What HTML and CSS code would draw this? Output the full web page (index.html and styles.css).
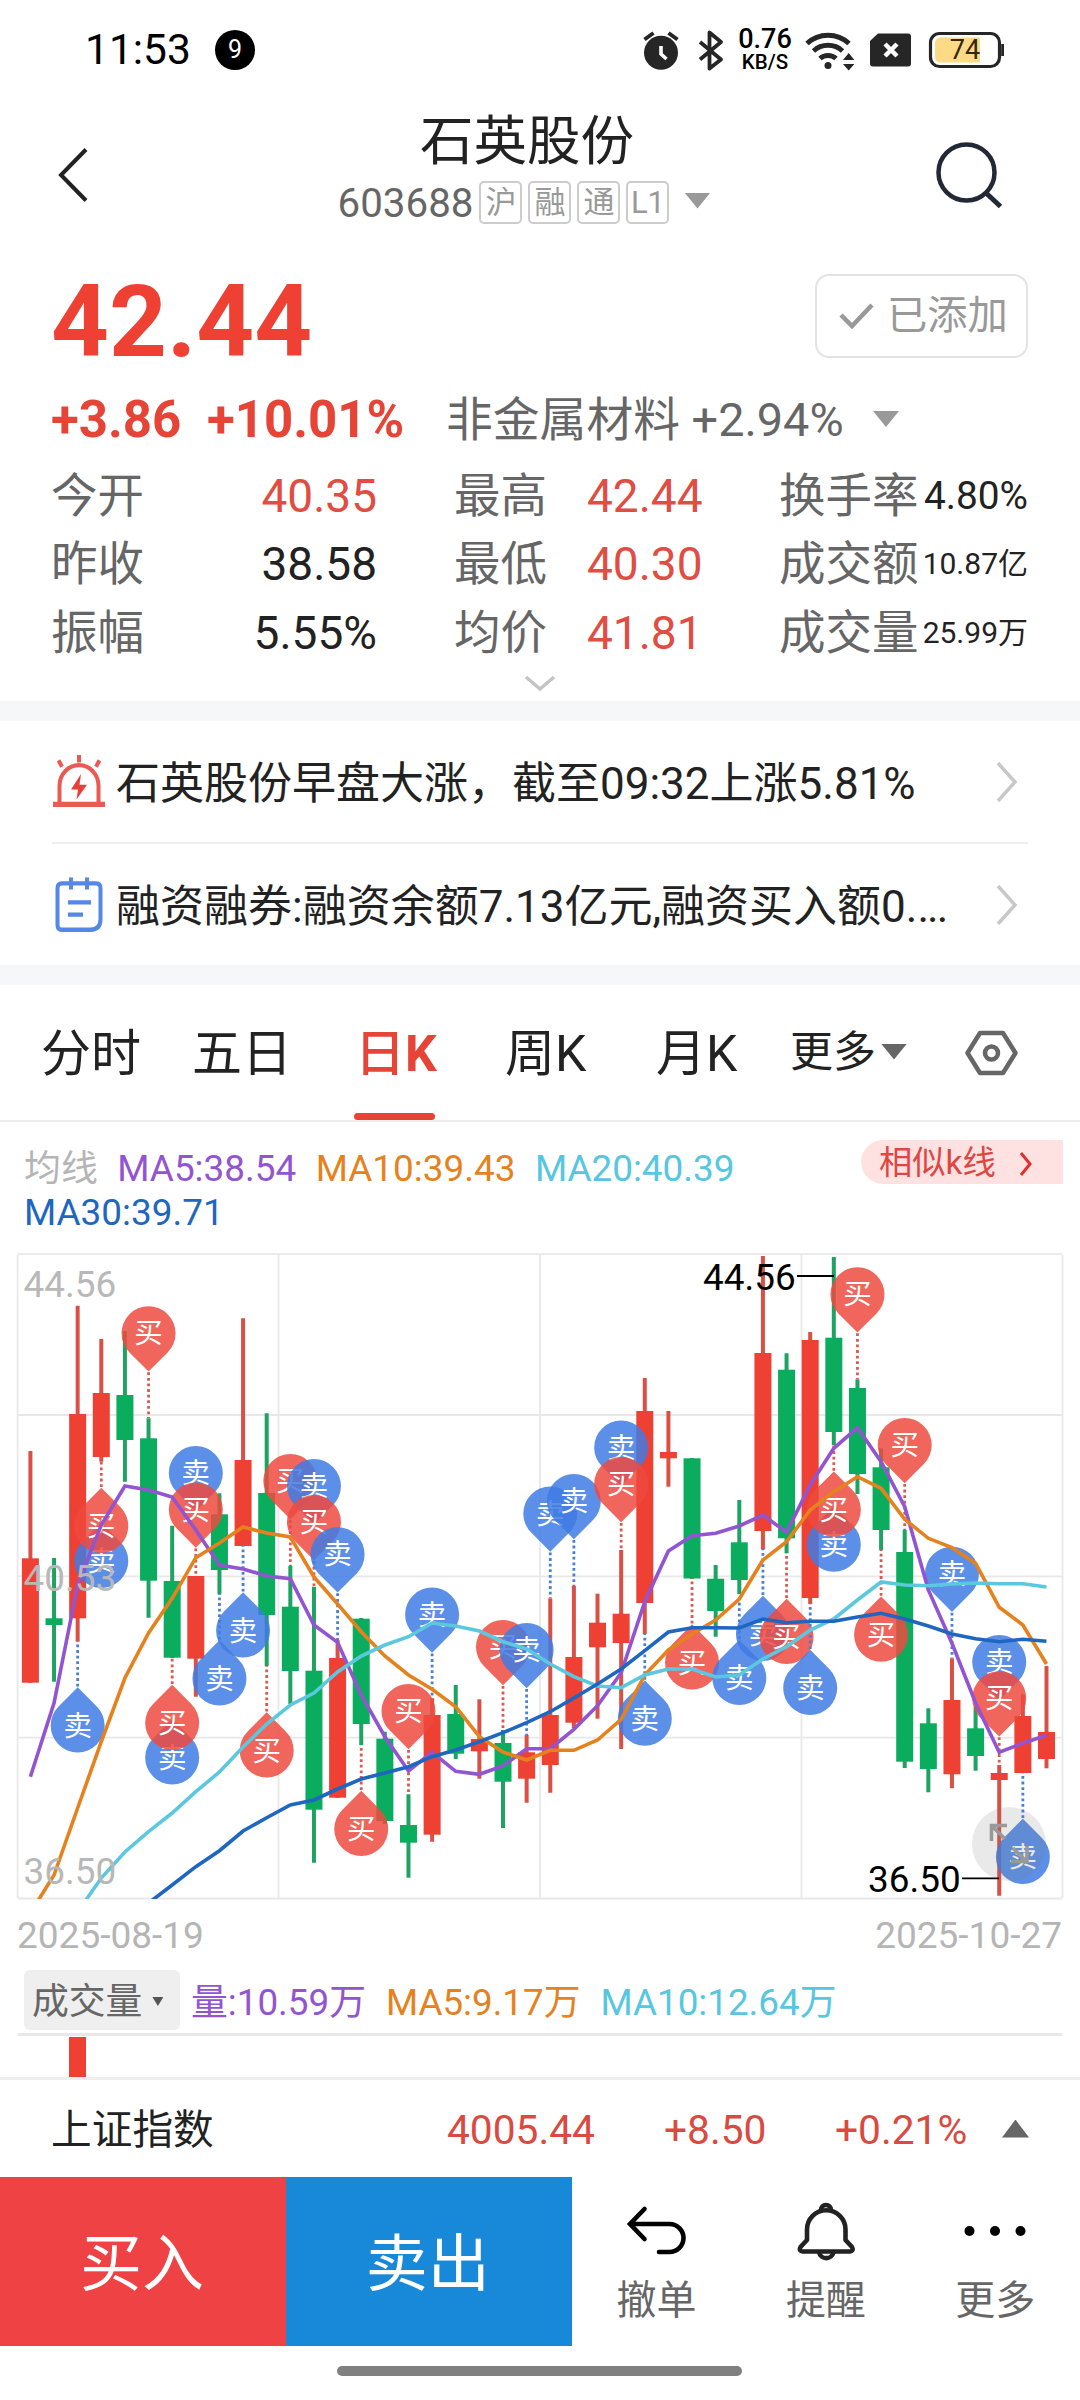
FILE: index.html
```html
<!DOCTYPE html>
<html lang="zh-CN">
<head>
<meta charset="utf-8">
<title>石英股份 603688</title>
<link rel="stylesheet" href="styles.css">
</head>
<body>
<div class="status">
  <span class="clock">11:53</span><span class="notice">9</span>
  <div class="status-icons">
    <svg class="i-alarm" width="38" height="44" viewBox="642 28 38 44"><circle cx="661" cy="52.8" r="17" fill="#262626"/><path d="M644.5 39.5l9-6.5M677.500 39.500l-9-6.5" stroke="#262626" stroke-width="4" fill="none"/><path d="M661 46v8l5.500 5" stroke="#fff" stroke-width="3.600" fill="none"/></svg>
    <svg class="i-bt" width="26" height="44" viewBox="698 28 26 44"><path d="M700 42l21 17.500-11.500 9V32.500L721 42l-21 17.500" fill="none" stroke="#262626" stroke-width="3.800" stroke-linejoin="round"/></svg>
    <div class="speed"><b>0.76</b><i>KB/S</i></div>
    <svg class="i-wifi" width="52" height="44" viewBox="804 26 52 44"><g fill="none" stroke="#262626" stroke-width="5"><path d="M807 41.500a31 31 0 0 1 42 0M813.500 49a21.500 21.500 0 0 1 29 0M820 56.500a12 12 0 0 1 16 0"/></g><circle cx="828" cy="63.500" r="3.500" fill="#262626"/><path d="M843 58l5.700-7 5.700 7zM843 62l5.700 6.500 5.700-6.500z" fill="#262626"/></svg>
    <svg class="i-sim" width="42" height="34" viewBox="870 33 42 34"><path d="M878 33.500h30q3 0 3 3v27q0 3-3 3h-35q-3 0-3-3V41z" fill="#262626"/><path d="M885 44l12 12M897 44l-12 12" stroke="#fff" stroke-width="4.500"/></svg>
    <svg class="i-bat" width="76" height="38" viewBox="928 31 76 38"><rect x="930.500" y="33.500" width="69" height="33" rx="9" fill="#fff" stroke="#262626" stroke-width="3.200"/><path d="M941 37.500h39v25h-39q-6 0-6-6v-13q0-6 6-6z" fill="#fddb86"/><path d="M1002.600 44v12" stroke="#262626" stroke-width="2.800"/><text x="965" y="59" font-size="27" text-anchor="middle" fill="#33260a">74</text></svg>
  </div>
</div>

<header class="header">
  <svg class="back" width="34" height="60" viewBox="56 145 34 60"><path d="M86 149.500L61 175l25 25.500" fill="none" stroke="#222" stroke-width="4"/></svg>
  <div class="title">
    <h1>石英股份</h1>
    <div class="code"><span class="num">603688</span><span class="tag">沪</span><span class="tag">融</span><span class="tag">通</span><span class="tag">L1</span><i class="tri"></i></div>
  </div>
  <svg class="search" width="68" height="68" viewBox="936 142 68 68"><circle cx="966.500" cy="172.500" r="28" fill="none" stroke="#232836" stroke-width="4.500"/><path d="M985 192l15.500 14.500" stroke="#232836" stroke-width="5"/></svg>
</header>

<section class="quote">
  <div class="price-row">
    <strong class="price">42.44</strong>
    <div class="added"><svg width="38" height="30" viewBox="0 0 38 30"><path d="M3 14l11 11L34 4" fill="none" stroke="#999" stroke-width="4.500"/></svg>已添加</div>
  </div>
  <div class="change"><b class="diff">+3.86</b><b class="pct">+10.01%</b><span class="sector">非金属材料 +2.94%</span><i class="tri"></i></div>
  <div class="stats">
    <div><span>今开</span><em class="up">40.35</em></div><div><span>最高</span><em class="up">42.44</em></div><div><span>换手率</span><em class="mid">4.80%</em></div>
    <div><span>昨收</span><em>38.58</em></div><div><span>最低</span><em class="up">40.30</em></div><div><span>成交额</span><em class="small">10.87亿</em></div>
    <div><span>振幅</span><em>5.55%</em></div><div><span>均价</span><em class="up">41.81</em></div><div><span>成交量</span><em class="small">25.99万</em></div>
  </div>
  <svg class="expand" width="32" height="18" viewBox="0 0 32 18"><path d="M2 2l14 12L30 2" fill="none" stroke="#c4c4c4" stroke-width="3.500"/></svg>
</section>

<section class="news">
  <div class="news-row">
    <svg width="54" height="55" viewBox="51 752 54 52" preserveAspectRatio="none"><g fill="none" stroke="#ea5a52" stroke-width="4"><path d="M58.500 800v-18a19.500 19.500 0 0 1 39 0v18M78 753v7M57.500 758l3.500 6M98.500 758l-3.500 6"/><path d="M52 799.700h52" stroke-width="5"/></g><path d="M80 771l-10 14.500h7L75.500 795 86 781h-7.500z" fill="#ea3f38"/></svg>
    <p>石英股份早盘大涨，截至09:32上涨5.81%</p>
    <svg class="go" width="22" height="40" viewBox="0 0 22 40"><path d="M2 1l17 19L2 39" fill="none" stroke="#c8c8c8" stroke-width="3.500"/></svg>
  </div>
  <div class="news-row">
    <svg width="54" height="56" viewBox="51 872 54 52" preserveAspectRatio="none"><g fill="none" stroke="#5387e8" stroke-width="4"><path d="M61 878h34q4.500 0 4.500 4.500V911q0 10-10 10H61q-4.500 0-4.500-4.500v-34q0-4.500 4.500-4.500zM70 872.500v11M86 872.500v11"/><path d="M67 895.500h23M67 907h15"/></g></svg>
    <p>融资融券:融资余额7.13亿元,融资买入额0.<span class="dots">...</span></p>
    <svg class="go" width="22" height="40" viewBox="0 0 22 40"><path d="M2 1l17 19L2 39" fill="none" stroke="#c8c8c8" stroke-width="3.500"/></svg>
  </div>
</section>

<nav class="tabs">
  <span>分时</span><span>五日</span><span class="active">日<b>K</b></span><span>周K</span><span>月K</span><span class="more">更多<i class="tri"></i></span>
  <svg width="54" height="46" viewBox="965 1017.500 54 46"><path d="M980 1020.500h23l12.500 20-12.500 20h-23l-12.500-20z" fill="none" stroke="#666" stroke-width="4.500" stroke-linejoin="round"/><circle cx="991.500" cy="1040.500" r="6.500" fill="none" stroke="#666" stroke-width="4.500"/></svg>
</nav>

<div class="ma">
  <div class="ma-list"><span class="label">均线</span><span class="c5">MA5:38.54</span><span class="c10">MA10:39.43</span><span class="c20">MA20:40.39</span><span class="c30">MA30:39.71</span></div>
  <div class="similar">相似k线<svg width="16" height="26" viewBox="0 0 16 26"><path d="M3 2l9 11-9 11" fill="none" stroke="#e0302c" stroke-width="3"/></svg></div>
</div>

<svg class="chart" id="chart" width="1080" height="664" viewBox="0 1240 1080 664"></svg>
<div class="dates"><span>2025-08-19</span><span>2025-10-27</span></div>

<div class="volume-head"><span class="pick">成交量<i class="tri"></i></span><span class="c5">量:10.59万</span><span class="c10">MA5:9.17万</span><span class="c20">MA10:12.64万</span></div>
<div class="volume"><i class="bar"></i></div>

<div class="index-row"><span class="name">上证指数</span><span class="point">4005.44</span><span class="delta">+8.50</span><span class="rate">+0.21%</span><i class="tri-up"></i></div>

<footer class="actions">
  <button class="buy">买入</button><button class="sell">卖出</button>
  <div class="act"><svg width="64" height="64" viewBox="624 2200 64 64"><path d="M644.500 2209L630 2224l14.500 15M631 2224h38.500a14 14 0 0 1 0 28H659" fill="none" stroke="#000" stroke-width="4.600" stroke-linecap="round"/></svg>撤单</div>
  <div class="act"><svg width="64" height="64" viewBox="792.500 2200 64 64"><g fill="none" stroke="#222" stroke-width="4.600" stroke-linejoin="round"><path d="M805.500 2229.500a19 19 0 0 1 38.500 0v10.500l6.500 7q2 4-2 4.500h-47.500q-4-.5-2-4.500l6.500-7z"/><path d="M819.500 2210a5 5 0 0 1 10 0M817.500 2252.500a7.500 7.500 0 0 0 14.500 0"/></g></svg>提醒</div>
  <div class="act"><svg width="64" height="64" viewBox="963 2200 64 64"><g fill="#000"><circle cx="969.500" cy="2231" r="5"/><circle cx="995" cy="2231" r="5"/><circle cx="1020.500" cy="2231" r="5"/></g></svg>更多</div>
</footer>
<div class="home"></div>
<script src="chart.js"></script>
</body>
</html>
```
FILE: styles.css
```css
* { box-sizing: border-box; }
body {
  margin: 0; width: 1080px; height: 2400px; overflow: hidden; background: #fff;
  font-family: Roboto, "Noto Sans CJK SC", sans-serif; color: #222;
  display: flex; flex-direction: column; white-space: nowrap;
}
body > * { flex: none; }
h1, p { margin: 0; font-weight: 400; }
em, i { font-style: normal; }
svg { display: block; flex: none; }
.tri { display: block; width: 26px; height: 16px; background: #999; clip-path: polygon(0 0, 100% 0, 50% 100%); }

.status { height: 100px; padding: 0 76px 0 85px; display: flex; align-items: center; color: #000; }
.clock { font-size: 42.500px; width: 130px; line-height: 100px; }
.notice { width: 40px; height: 40px; border-radius: 50%; background: #000; color: #fff; font-size: 25px; line-height: 40px; text-align: center; }
.status-icons { margin-left: auto; display: flex; align-items: center; }
.i-bt { margin-left: 18px; }
.speed { margin-left: 14px; width: 54px; display: flex; flex-direction: column; align-items: center; }
.speed b { font-weight: 500; font-size: 27px; line-height: 24px; }
.speed i { font-weight: 500; font-size: 20.500px; line-height: 22px; }
.i-wifi { margin-left: 12px; }
.i-sim { margin-left: 14px; }
.i-bat { margin-left: 16px; }

.header { height: 154px; padding: 0 76px 0 56px; display: flex; justify-content: space-between; align-items: flex-start; }
.back { margin-top: 45px; }
.search { margin-top: 42px; }
.title { width: 414px; margin-left: 28px; padding-top: 8px; display: flex; flex-direction: column; align-items: center; }
.title h1 { font-size: 53.500px; line-height: 68px; }
.code { display: flex; align-items: center; height: 52px; margin-left: -6px; }
.code .num { font-size: 40.300px; color: #666; margin-right: 6px; padding-top: 2px; }
.tag { width: 43px; height: 43px; border: 2px solid #ccc; border-radius: 5px; margin-right: 6px; color: #999; font-size: 31px; line-height: 40px; text-align: center; }
.code .tri { margin-left: 9px; margin-top: -3px; }

.quote { height: 447px; padding: 0 52px 0 51px; display: flex; flex-direction: column; }
.price-row { display: flex; justify-content: space-between; height: 120px; align-items: flex-start; padding-top: 20px; }
.price { font-size: 101px; line-height: 95px; color: #ee4134; font-weight: 700; }
.added { width: 213px; height: 84px; border: 2px solid #e3e3e3; border-radius: 14px; display: flex; align-items: center; padding-left: 21px; gap: 11px; font-size: 40.300px; line-height: 78px; color: #999; }
.change { display: flex; align-items: center; height: 92px; font-size: 46.800px; line-height: 88px; color: #666; }
.change b { font-size: 51px; line-height: 96px; color: #e64437; font-weight: 700; }
.change .diff { width: 156px; }
.change .pct { width: 239px; }
.sector { width: 427px; }
.change .tri { margin-top: -2px; }
.stats { display: grid; grid-template-columns: 403px 325px 249px; grid-auto-rows: 68.300px; margin-top: -4px; }
.stats div { display: flex; align-items: center; font-size: 46.500px; line-height: 68px; color: #666; }
.stats em { font-size: 46px; color: #222; }
.stats div:nth-child(3n+1) { padding-right: 77px; justify-content: space-between; }
.stats div:nth-child(3n+2) { gap: 40px; }
.stats div:nth-child(3n) { justify-content: space-between; }
.stats .up { color: #e04d42; }
.stats em.mid { font-size: 38.800px; }
.stats em.small { font-size: 30px; }
.expand { align-self: center; margin-top: 8px; }

.news { border-top: 20px solid #f6f7f9; border-bottom: 20px solid #f6f7f9; height: 284px; padding: 0 52px; }
.news-row { height: 121px; display: flex; align-items: center; }
.news-row + .news-row { border-top: 2px solid #eee; height: 123px; }
.news-row p { margin-left: 10px; font-size: 44px; line-height: 64px; padding-top: 5px; }
.news-row .go { margin-left: auto; margin-right: 10px; }
.dots { letter-spacing: -2px; }

.tabs { height: 137px; border-bottom: 2px solid #eee; padding-left: 41px; display: flex; align-items: center; font-size: 50px; }
.tabs span { line-height: 139px; height: 135px; width: 151px; }
.tabs span:nth-child(2) { width: 163px; }
.tabs .active { width: 150px; color: #e64437; font-weight: 500; position: relative; }
.tabs .active::after { content: ""; position: absolute; left: -1px; bottom: 0; width: 81px; height: 7px; border-radius: 4px; background: #e64437; }
.tabs span:nth-child(4) { width: 151px; }
.tabs span:nth-child(5) { width: 134px; }
.tabs .more { font-size: 43px; width: 175px; display: flex; align-items: center; gap: 5px; }
.more .tri { background: #666; margin-top: -2px; }

.ma { height: 118px; padding: 18px 17px 0 24px; display: flex; justify-content: space-between; align-items: flex-start; font-size: 36.900px; line-height: 44px; }
.ma-list { width: 780px; margin-top: 7px; display: flex; flex-wrap: wrap; column-gap: 19.500px; }
.label { color: #b5b5b5; }
.c5 { color: #9254d0; } .c10 { color: #e6821e; } .c20 { color: #56c6e2; } .c30 { color: #1f66c0; }
.similar { width: 202px; height: 44px; background: #fde2e1; color: #df4541; border-radius: 22px 0 0 22px; font-size: 33.300px; line-height: 49px; padding-left: 18px; display: flex; align-items: center; gap: 22px; }
.similar svg { margin-top: 3px; }

.dates { display: flex; justify-content: space-between; padding: 0 18px 0 17px; height: 66px; font-size: 37px; line-height: 64px; color: #b5b5b5; }
.volume-head { height: 66px; margin: 0 18px; padding-left: 6px; display: flex; font-size: 36.800px; line-height: 66px; border-bottom: 3px solid #e8e8e8; gap: 20px; }
.pick { width: 156px; height: 60px; margin-right: -9px; background: #efefef; border-radius: 6px; color: #666; padding: 3px 0 0 8px; display: flex; align-items: center; gap: 10px; }
.pick .tri { width: 11px; height: 9px; background: #555; }
.volume { height: 44px; border-bottom: 3px solid #eee; padding: 1px 0 0 69px; }
.bar { display: block; width: 17px; height: 40px; background: #ee4134; }

.index-row { height: 97px; padding-left: 51px; display: flex; align-items: center; font-size: 40.700px; line-height: 97px; color: #d94a40; }
.index-row span { padding-top: 3px; }
.index-row .name { width: 396px; color: #222; }
.index-row .point { width: 217px; }
.index-row .delta { width: 171px; }
.index-row .rate { width: 167px; }
.tri-up { width: 27px; height: 18px; background: #666; clip-path: polygon(50% 0, 100% 100%, 0 100%); }

.actions { height: 169px; display: flex; }
.actions button { border: 0; padding: 7px 2px 0 0; width: 286px; color: #fff; font: 400 62px/162px Roboto, "Noto Sans CJK SC", sans-serif; }
.buy { background: #ee4244; }
.sell { background: #1888d8; }
.act { width: 169.500px; padding-top: 23px; display: flex; flex-direction: column; align-items: center; font-size: 40px; line-height: 73px; color: #666; }
.home { width: 405px; height: 10px; margin: 20px 0 0 337px; border-radius: 5px; background: #808080; }
```
FILE: chart.js
```js
// Candles: [high, open/close top, open/close bottom, low, rising]
const candles = [
  [1451,1558.3,1682.7,1682.7,1],[1558,1618.3,1625,1681.7,0],[1305.7,1414,1618.3,1641.7,1],[1339,1393,1457,1461.7,1],
  [1331,1395,1440,1481.7,0],[1418.3,1438.3,1580.7,1617.7,0],[1525.7,1581,1657.7,1658,0],[1576,1576,1658.7,1696.7,1],
  [1493.3,1514.3,1570,1594.3,0],[1318.3,1460,1546,1546,1],[1413.3,1493,1615,1666,0],[1566,1606.7,1671,1704,0],
  [1586.7,1670.7,1809.7,1862.7,0],[1640,1658,1797.7,1797.7,1],[1618,1618.7,1724,1745,0],[1731.7,1738.7,1821,1824,0],
  [1794.3,1825,1842.7,1877.7,0],[1698.3,1715,1834.7,1841.7,1],[1685,1714,1753.7,1759,0],[1699.3,1739,1751.3,1778.7,1],
  [1730,1743,1781.7,1828,0],[1735,1752.3,1778.7,1802.7,1],[1598.3,1715,1765,1792.7,1],[1586,1657,1722.7,1728,1],
  [1593.7,1622.7,1647.3,1718.7,1],[1550,1613.7,1643,1749,1],[1378,1411,1603,1634,1],[1411,1452,1458.3,1486.7,1],
  [1458,1458.3,1578.5,1579,0],[1565,1578.7,1611,1636.7,0],[1500,1542.3,1580,1594,0],[1256,1353,1531,1549.3,1],
  [1353.3,1369.7,1538.3,1553.3,0],[1332,1340,1598,1604,1],[1257,1337.7,1432,1445,0],[1379.3,1388,1474,1494,0],
  [1448.3,1467.3,1530,1550,0],[1530,1552,1761.7,1768,0],[1708.3,1723.3,1769,1792.3,0],[1658.3,1700,1774.3,1788.3,1],
  [1706.7,1728.3,1756,1770.7,0],[1765,1773,1780,1895.7,1],[1694.3,1716,1773,1773,1],[1666,1732,1759,1768.3,1]
];
// Moving averages: first index, colour, values
const averages = [
  [0,'#9254d0',[1776.7,1703,1585,1525,1486,1490,1497,1530,1565,1569,1576,1578.7,1625,1642.3,1695,1736.7,1771,1752.3,1771.3,1774.3,1766,1748.7,1748.7,1729.3,1705.7,1672.7,1601.7,1551,1535.7,1533.3,1526,1515,1532.3,1485,1448.3,1427.7,1461.7,1506.7,1590,1643.3,1703,1752.3,1743.3,1735.3]],
  [0,'#e6821e',[1913,1875,1808,1741.7,1678,1633,1598.3,1557.7,1543,1527,1533,1537,1577,1604,1631.7,1656,1675,1689.3,1706.7,1736.7,1752,1760,1750.3,1750.3,1740,1719.3,1675,1650,1634,1620,1599,1560,1541.7,1510,1491.7,1476.7,1488.3,1519.3,1538.3,1547.7,1563.3,1607.3,1625,1664]],
  [2,'#5bc8e0',[1912,1878,1852,1831.7,1813,1791.7,1772,1747,1724,1705,1693,1672,1656,1645,1636.7,1623,1626,1631,1641.7,1649,1664,1676.7,1686,1687.7,1675,1669,1669,1677,1675,1659,1646.7,1630,1619,1600,1582,1585,1585.7,1584,1583,1583.7,1583.7,1587]],
  [5,'#1f66c0',[1903,1885,1866.7,1850.7,1831,1817.7,1805,1800,1789,1779,1773,1766.7,1756.7,1750,1741.7,1732.7,1722.7,1711.7,1698,1684,1669,1650.7,1632,1627.7,1627.7,1628,1619,1622.7,1621.3,1621.3,1617,1613.3,1619,1626,1634,1638.7,1641.7,1639.3,1641.3]]
];
// Trades: [index, buy/sell, side of the tip, centre, end of the dotted leader]
const trades = [
  [2,'S','up',1725.5,1641.7],[3,'S','up',1561,0],[3,'B','up',1526,1461.7],[5,'B','dn',1333.3,1418],
  [6,'S','up',1757.5,0],[6,'B','up',1723,1658],[7,'S','dn',1473,0],[7,'B','dn',1509.5,1576],
  [8,'S','up',1678.5,1594],[9,'S','up',1630.5,1546],[10,'B','up',1750.5,1666],[11,'B','dn',1481,1566],
  [12,'S','dn',1486,0],[12,'B','dn',1522,1586],[13,'S','dn',1554.3,1640],[14,'B','up',1829,1745],
  [16,'B','dn',1711,1794],[17,'S','dn',1614.5,1698],[20,'B','dn',1647,1730],[21,'S','dn',1650,1735],
  [22,'S','dn',1513.5,1598],[23,'S','dn',1501,1586],[25,'S','dn',1447.5,0],[25,'B','dn',1484,1550],
  [26,'S','up',1718.7,1634],[28,'B','up',1662.5,1578],[30,'S','up',1678,1594],[31,'S','up',1634,1549],
  [32,'B','up',1637,1553],[33,'S','up',1688,1604],[34,'S','up',1544.7,0],[34,'B','up',1509.7,1445],
  [35,'B','dn',1294.3,1379],[36,'B','up',1634.7,1550],[37,'B','dn',1445,1530],[39,'S','dn',1573.7,1658],
  [41,'S','dn',1662,0],[41,'B','dn',1698.3,1765],[42,'S','up',1857,1773]
];
const x = i => 30.4 + 23.63 * i;
const out = ['<clipPath id="plot"><rect x="17" y="1254" width="1046" height="645"/></clipPath>'];
out.push('<path d="M18 1254.200H1062M18 1415H1062M18 1576.300H1062M18 1737.700H1062M18 1898.500H1062M17.600 1255V1898M278.500 1255V1898M540 1255V1898M801.500 1255V1898M1062.500 1255V1898" stroke="#e8e8e8" stroke-width="1.800" fill="none"/>');
candles.forEach(([hi, top, bottom, lo, up], i) => {
  const c = x(i);
  out.push(`<path d="M${c} ${hi}V${lo}" stroke="${up ? '#d95045' : '#1ea362'}" stroke-width="4"/><rect x="${c - 8.5}" y="${top}" width="17" height="${bottom - top}" fill="${up ? '#ee4134' : '#0aad5e'}"/>`);
});
trades.forEach(([i, side, dir, cy, end]) => {
  const c = x(i), s = dir === 'up' ? -1 : 1, buy = side === 'B', k = 19.1;
  if (end) out.push(`<path d="M${c} ${cy + s * 39}V${end}" stroke="${buy ? '#db5950' : '#4a80d0'}" stroke-width="2.800" stroke-dasharray="2.800 2.800"/>`);
  out.push(`<path d="M${c} ${cy + s * 38.3}L${c - k} ${cy + s * k}A27 27 0 1 ${s > 0 ? 1 : 0} ${c + k} ${cy + s * k}Z" fill="${buy ? '#ed4a3f' : '#3f7be3'}" opacity=".85"/><text x="${c}" y="${cy + 10}" font-size="28.500" text-anchor="middle" fill="#fff">${buy ? '买' : '卖'}</text>`);
});
averages.forEach(([start, color, ys]) => {
  out.push(`<polyline clip-path="url(#plot)" points="${ys.map((y, j) => x(start + j) + ',' + y).join(' ')}" fill="none" stroke="${color}" stroke-width="3.600"/>`);
});
out.push('<g font-size="36.900" fill="#b8b8b8"><text x="23.500" y="1297">44.56</text><text x="23.500" y="1591">40.53</text><text x="23.500" y="1884">36.50</text></g>');
out.push('<g font-size="36.900" fill="#000"><text x="703" y="1290">44.56</text><text x="868" y="1892">36.50</text></g><path d="M797 1276h37M962 1878.300h37" stroke="#000" stroke-width="1.800"/>');
out.push('<circle cx="1009" cy="1844" r="37" fill="#777" opacity=".16"/><path d="M1007 1825.500h-15.500V1841M992 1826l13 13M1011 1861.500h16V1846M1026 1861l-13-13" fill="none" stroke="#999" stroke-width="3.600"/>');
document.getElementById('chart').innerHTML = out.join('');
```
